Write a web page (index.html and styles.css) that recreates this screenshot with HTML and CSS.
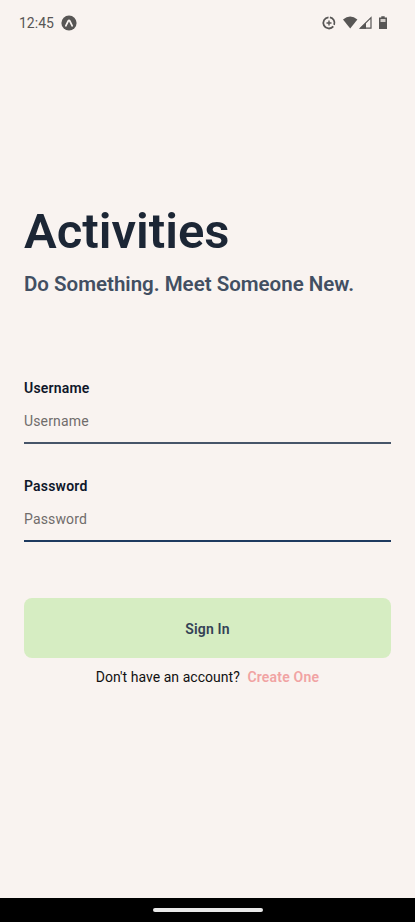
FILE: index.html
```html
<!DOCTYPE html>
<html lang="en">
<head>
    <meta charset="UTF-8">
    <meta name="viewport" content="width=device-width, initial-scale=1.0">
    <title>Activities</title>
    <link rel="stylesheet" href="styles.css">
</head>
<body>
    <div class="screen">
        <header class="status-bar">
            <span class="clock">12:45</span>
            <svg class="app-icon" width="16" height="16" viewBox="0 0 16 16">
                <circle cx="8" cy="8" r="7.6" fill="#585655"/>
                <path d="M4.8 10.8 L7.2 6 Q8 4.5 8.8 6 L11.2 10.8" fill="none" stroke="#f9f3f0" stroke-width="1.7" stroke-linecap="round"/>
            </svg>
            <svg class="system-icons" width="68" height="16" viewBox="0 0 68 16">
                <!-- Data saver -->
                <path d="M7.5 2.3 A5.6 5.6 0 1 0 12.3 11.4 M8.9 2.3 A5.6 5.6 0 0 1 13.1 9.9" fill="none" stroke="#585655" stroke-width="1.8"/>
                <path d="M8 5.5 V10.5 M5.5 8 H10.5" stroke="#585655" stroke-width="1.4"/>
                <!-- Wifi -->
                <path d="M22 4.4 Q29.2 -1.4 36.4 4.4 L29.2 13.4 Z" fill="#585655"/>
                <!-- Signal -->
                <path d="M50 2.6 V13.2 H39.4 Z" fill="none" stroke="#585655" stroke-width="1.2"/>
                <path d="M45 7.4 V13.8 H38.4 Z" fill="#585655"/>
                <!-- Battery -->
                <path d="M60.3 1.3 H63.7 V2.6 H66 V14 H58 V2.6 H60.3 Z" fill="#585655"/>
                <path d="M59.5 4 H64.5 V7 H59.5 Z" fill="#d3cecb"/>
            </svg>
        </header>

        <main class="content">
            <h1>Activities</h1>
            <h2>Do Something. Meet Someone New.</h2>

            <form class="login-form">
                <label for="username">Username</label>
                <input type="text" id="username" placeholder="Username">

                <label for="password">Password</label>
                <input type="password" id="password" class="last-input" placeholder="Password">

                <button type="button">Sign In</button>
            </form>

            <p class="signup">Don't have an account? <a href="#">Create One</a></p>
        </main>

        <footer class="nav-bar">
            <div class="nav-handle"></div>
        </footer>
    </div>
</body>
</html>
```
FILE: styles.css
```css
* {
    box-sizing: border-box;
}

body {
    margin: 0;
    font-family: Roboto, sans-serif;
    background-color: #f9f3f0;
    color: #1c2635;
}

.screen {
    display: flex;
    flex-direction: column;
    height: 922px;
}

/* Status bar */
.status-bar {
    display: flex;
    align-items: center;
    height: 46px;
    padding: 0 26px 0 19px;
}

.clock {
    font-size: 14px;
    color: #585655;
}

.app-icon {
    margin-left: 7px;
}

.system-icons {
    margin-left: auto;
}

/* Main content */
.content {
    flex: 1;
    padding: 158px 24px 0;
}

h1 {
    margin: 0;
    font-size: 49px;
    font-weight: 600;
    line-height: 56px;
}

h2 {
    margin: 12px 0 0;
    font-size: 20.5px;
    font-weight: 600;
    line-height: 24px;
    color: #424f62;
}

/* Login form */
.login-form {
    display: flex;
    flex-direction: column;
    margin-top: 84px;
}

label {
    font-size: 14px;
    font-weight: 600;
    line-height: 16px;
    letter-spacing: 0.2px;
    color: #0f172a;
}

input {
    height: 48px;
    margin: 0 0 34px;
    padding: 3px 0 0;
    border: none;
    border-bottom: 2px solid #475569;
    background: transparent;
    font-family: inherit;
    font-size: 14px;
    letter-spacing: 0.15px;
    outline: none;
}

input::placeholder {
    color: #706c6b;
}

.last-input {
    margin-bottom: 56px;
    border-bottom-color: #1e3a5f;
}

button {
    height: 60px;
    padding: 2px 0 0;
    border: none;
    border-radius: 8px;
    background-color: #d6edc2;
    color: #334155;
    font-family: inherit;
    font-size: 14px;
    font-weight: 600;
    letter-spacing: 0.2px;
}

.signup {
    margin: 11px 0 0;
    text-align: center;
    font-size: 14px;
    line-height: 16px;
    letter-spacing: 0.04px;
    color: #111;
}

.signup a {
    margin-left: 4px;
    color: #f1a3a3;
    font-weight: 600;
    letter-spacing: 0.2px;
    text-decoration: none;
}

/* Navigation bar */
.nav-bar {
    display: flex;
    justify-content: center;
    align-items: center;
    height: 24px;
    background-color: #000;
}

.nav-handle {
    width: 110px;
    height: 4px;
    border-radius: 2px;
    background-color: #e8e8e8;
}
```
